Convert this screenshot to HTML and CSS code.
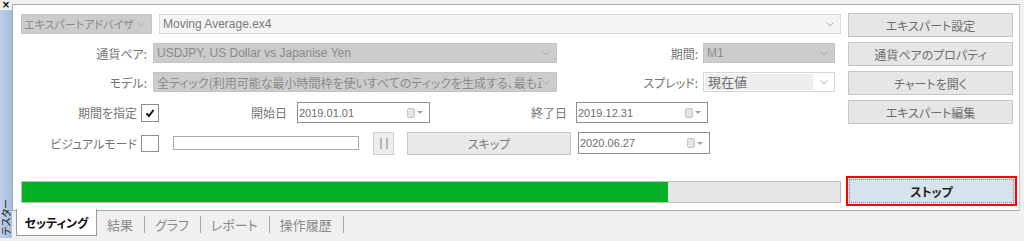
FILE: index.html
```html
<!DOCTYPE html>
<html lang="ja">
<head>
<meta charset="utf-8">
<title>テスター</title>
<link rel="stylesheet" href="styles.css">
</head>
<body>
<div class="app">
  <div class="strip">
    <span class="close">×</span>
    <span class="vtitle">テスター</span>
  </div>
  <div class="main">
    <div class="panel">
      <div class="form">
        <div class="row r1">
          <div class="ea-select"><span>エキスパートアドバイザ</span><svg class="chev" viewBox="0 0 8 5"><polyline points="0.5,0.5 4,4 7.5,0.5"/></svg></div>
          <div class="combo light wide"><span class="latin">Moving Average.ex4</span><svg class="chev" viewBox="0 0 8 5"><polyline points="0.5,0.5 4,4 7.5,0.5"/></svg></div>
        </div>
        <div class="row r2">
          <label class="lbl l1">通貨ペア:</label>
          <div class="combo grey mid"><span class="latin">USDJPY, US Dollar vs Japanise Yen</span><svg class="chev" viewBox="0 0 8 5"><polyline points="0.5,0.5 4,4 7.5,0.5"/></svg></div>
          <label class="lbl l2">期間:</label>
          <div class="combo grey small"><span class="latin">M1</span><svg class="chev" viewBox="0 0 8 5"><polyline points="0.5,0.5 4,4 7.5,0.5"/></svg></div>
        </div>
        <div class="row r3">
          <label class="lbl l1">モデル:</label>
          <div class="combo grey mid"><span class="clip">全ティック(利用可能な最小時間枠を使いすべてのティックを生成する、最も正確</span><svg class="chev" viewBox="0 0 8 5"><polyline points="0.5,0.5 4,4 7.5,0.5"/></svg></div>
          <label class="lbl l2">スプレッド:</label>
          <div class="combo white small"><span class="val">現在値</span><svg class="chev" viewBox="0 0 8 5"><polyline points="0.5,0.5 4,4 7.5,0.5"/></svg></div>
        </div>
        <div class="row r4">
          <label class="lbl l3">期間を指定</label>
          <span class="check"><svg viewBox="0 0 10 10"><polyline points="1.5,5.5 4,8 8.5,2"/></svg></span>
          <label class="lbl l4">開始日</label>
          <div class="date d1"><span>2019.01.01</span><span class="cal"></span><span class="tri"></span></div>
          <label class="lbl l5">終了日</label>
          <div class="date d2"><span>2019.12.31</span><span class="cal"></span><span class="tri"></span></div>
        </div>
        <div class="row r5">
          <label class="lbl l3">ビジュアルモード</label>
          <span class="check"></span>
          <div class="slider"></div>
          <div class="pause"><i></i><i></i></div>
          <div class="skip">スキップ</div>
          <div class="date d3"><span>2020.06.27</span><span class="cal"></span><span class="tri"></span></div>
        </div>
        <div class="progress"><div class="fill" style="width:79%"></div></div>
      </div>
      <div class="side">
        <div class="btn">エキスパート設定</div>
        <div class="btn">通貨ペアのプロパティ</div>
        <div class="btn">チャートを開く</div>
        <div class="btn">エキスパート編集</div>
        <div class="stop"><span>ストップ</span></div>
      </div>
    </div>
    <div class="tabs">
      <div class="tab active">セッティング</div>
      <div class="tab">結果</div><span class="sep"></span>
      <div class="tab">グラフ</div><span class="sep"></span>
      <div class="tab">レポート</div><span class="sep"></span>
      <div class="tab">操作履歴</div><span class="sep"></span>
    </div>
  </div>
</div>
</body>
</html>
```
FILE: styles.css
```css
* { box-sizing: border-box; }
html, body { margin: 0; padding: 0; }
body {
  width: 1024px;
  height: 241px;
  overflow: hidden;
  background: #f0f0f0;
  font-family: "Noto Sans CJK JP", "Liberation Sans", sans-serif;
  font-feature-settings: "palt";
  font-size: 12px;
  color: #747474;
}
.app { display: flex; height: 241px; }

.strip {
  width: 12px;
  height: 238px;
  background: linear-gradient(to right, #bfd0e8, #a6bddc);
  display: flex;
  flex-direction: column;
  justify-content: space-between;
  align-items: center;
}
.close {
  font-family: "DejaVu Sans", sans-serif;
  font-weight: bold;
  font-size: 10px;
  line-height: 10px;
  height: 10px;
  color: #000;
  width: 12px;
  text-align: center;
  background: #f0f0f0;
}
.vtitle {
  writing-mode: vertical-rl;
  text-orientation: sideways;
  transform: rotate(180deg);
  font-size: 10px;
  line-height: 12px;
  color: #222;
  margin-bottom: 2px;
}

.main { flex: 1; padding-top: 4px; padding-right: 4px; }
.panel {
  height: 207px;
  background: #fff;
  border: 1px solid #a9a9a9;
  border-right-color: #c8c8c8;
  display: flex;
}
.form { width: 828px; padding-left: 8px; padding-top: 9px; }
.row { display: flex; align-items: center; }
.r1, .r2, .r3 { height: 20px; }
.r2, .r3 { margin-top: 9px; }
.r4 { height: 21px; margin-top: 10px; }
.r5 { height: 24px; margin-top: 8px; }

.chev { width: 8px; height: 5px; fill: none; stroke: #a8a8a8; stroke-width: 1; flex: none; }

.ea-select {
  width: 131px; height: 20px;
  background: #cccccc;
  border: 1px solid #c4c4c4;
  display: flex; align-items: center; justify-content: space-between;
  padding: 0 6px 0 2px;
  color: #8a8a8a;
  font-size: 11px;
  white-space: nowrap;
}
.ea-select .chev { stroke: #b4b4b4; }

.combo {
  height: 20px;
  display: flex; align-items: center; justify-content: space-between;
  padding: 0 6px 0 3px;
  white-space: nowrap;
  overflow: hidden;
}
.combo .latin { font-family: "Liberation Sans", sans-serif; font-size: 12px; }
.combo.light { background: #f4f4f4; border: 1px solid #dadada; color: #7a7a7a; }
.combo.grey { background: #cccccc; border: 1px solid #c4c4c4; color: #8a8a8a; }
.combo.white { background: #fff; border: 1px solid #d6d6d6; padding: 1px 6px 1px 1px; }
.combo.white .val { background: #eeeeee; height: 16px; line-height: 16px; width: 108px; padding-left: 3px; font-size: 13px; color: #6d6d6d; }
.combo.wide { width: 682px; margin-left: 7px; }
.combo.mid { width: 404px; }
.combo.small { width: 132px; }
.combo .clip { overflow: hidden; width: 390px; font-size: 12px; color: #8a8a8a; }

.lbl { text-align: right; white-space: nowrap; flex: none; }
.l1 { width: 132px; padding-right: 6px; }
.l2 { width: 146px; padding-right: 5px; }
.l3 { width: 116px; padding-right: 0; }
.l4 { width: 138px; padding-right: 10px; }
.l5 { width: 146px; padding-right: 9px; }

.check {
  width: 18px; height: 18px;
  margin-left: 4px;
  border: 1px solid #8c8c8c;
  background: #fff;
  display: flex; align-items: center; justify-content: center;
  flex: none;
}
.check svg { width: 10px; height: 10px; fill: none; stroke: #111; stroke-width: 2; }
.r5 .check { height: 17px; }

.date {
  height: 21px;
  border: 1px solid #8f8f8f;
  background: #fff;
  display: flex; align-items: center;
  padding: 0 4px 0 1px;
  font-family: "Liberation Sans", sans-serif;
  font-size: 11px;
  color: #6d6d6d;
  flex: none;
}
.date span:first-child { flex: 1; }
.date.d1 { width: 133px; }
.date.d2, .date.d3 { width: 132px; }
.date.d3 { margin-left: 7px; height: 22px; }
.cal {
  width: 8px; height: 10px;
  background: #e4e4e4;
  border: 1px solid #c4c4c4;
  border-radius: 2px;
  margin-right: 2px;
}
.tri {
  width: 0; height: 0;
  border-left: 3px solid transparent;
  border-right: 3px solid transparent;
  border-top: 3px solid #a0a0a0;
  margin-right: 2px;
}

.slider {
  width: 186px; height: 14px;
  border: 1px solid #a8a8a8;
  background: #fff;
  margin-left: 14px;
  flex: none;
}
.pause {
  width: 21px; height: 23px;
  border: 1px solid #cfcfcf;
  background: #ededed;
  margin-left: 14px;
  display: flex; align-items: center; justify-content: center; gap: 4px;
  flex: none;
}
.pause i { width: 2px; height: 11px; background: #b4b4b4; display: block; }
.skip {
  width: 164px; height: 23px;
  border: 1px solid #c8c8c8;
  background: #e9e9e9;
  margin-left: 13px;
  display: flex; align-items: center; justify-content: center;
  color: #7a7a7a;
  flex: none;
}

.progress {
  width: 820px; height: 22px;
  margin-top: 26px;
  background: #e6e6e6;
  border: 1px solid #bcbcbc;
}
.progress .fill { height: 100%; background: #06b025; }

.side { width: 172px; margin-left: 5px; padding-top: 8px; display: flex; flex-direction: column; }
.btn {
  width: 165px; height: 24px;
  margin-left: 2px;
  margin-bottom: 5px;
  background: #e6e6e6;
  border: 1px solid #c6c6c6;
  display: flex; align-items: center; justify-content: center;
  color: #6d6d6d;
  white-space: nowrap;
}
.stop {
  width: 171px; height: 30px;
  margin-top: 47px;
  border: 2px solid #ff0000;
  background: #d6e2ec;
  display: flex; align-items: stretch; justify-content: stretch;
  padding: 1px;
}
.stop span {
  flex: 1;
  border: 1px dotted #8a8a8a;
  display: flex; align-items: center; justify-content: center;
  font-weight: bold;
  font-size: 12px;
  color: #1e1e1e;
}

.tabs { display: flex; align-items: center; padding-left: 4px; height: 27px; }
.tab { font-size: 13px; color: #8a8a8a; padding: 0 11px 0 10px; white-space: nowrap; }
.tab.active {
  width: 81px; height: 27px;
  margin-top: -2px;
  align-self: flex-start;
  background: #fff;
  border: 1px solid #9a9a9a;
  border-top: none;
  display: flex; align-items: center; justify-content: center;
  font-size: 12px; font-weight: bold; color: #111;
  padding: 0;
}
.sep { width: 1px; height: 17px; background: #a8a8a8; }
```
